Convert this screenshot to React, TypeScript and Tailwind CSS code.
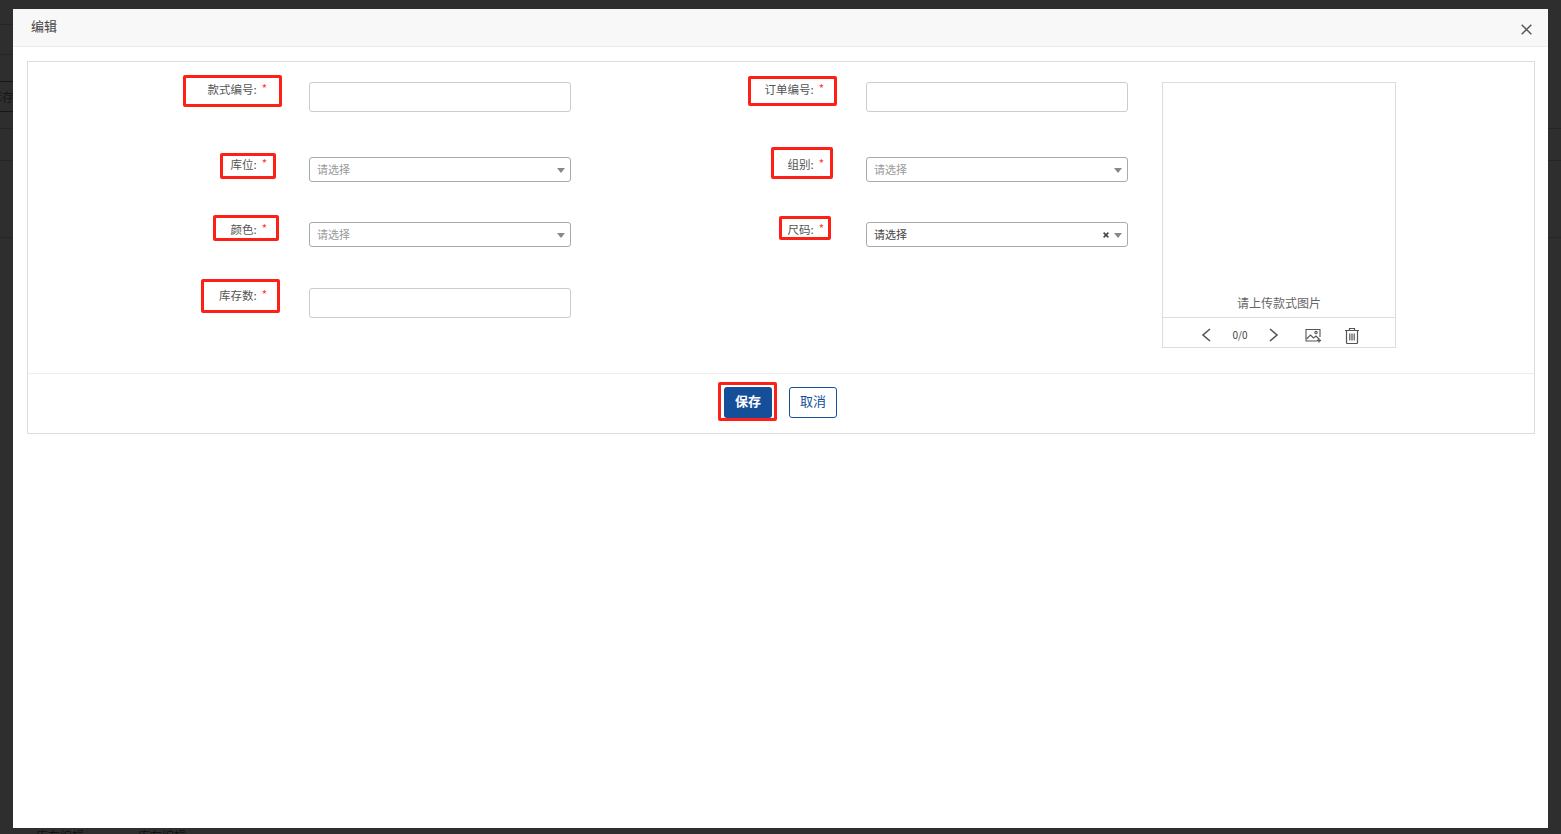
const cjk = "font-['Microsoft_YaHei','Noto_Sans_CJK_SC','Liberation_Sans',sans-serif]";

function Label({ text, box }: { text: string; box: string }) {
  return (
    <div className="relative flex h-[14px] items-start justify-end text-[11.5px] leading-[14px] text-[#555]">
      <span className="whitespace-nowrap">{text}:</span>
      <span className="ml-[5px] mt-[-1px] text-[#f33]">*</span>
      <div className={`pointer-events-none absolute rounded-[2px] border-[3px] border-[#fc2016] ${box}`} />
    </div>
  );
}

function TextInput() {
  return <div className="h-[30px] w-[262px] rounded-[3px] border border-[#ccc] bg-white" />;
}

function Select({ text, filled }: { text: string; filled?: boolean }) {
  return (
    <div className="flex h-[25px] w-[262px] items-center rounded-[3px] border border-[#aaa] bg-white pl-[7px] pr-[5px]">
      <span className={`flex-1 text-[11px] leading-[23px] ${filled ? "text-[#444]" : "text-[#999]"}`}>{text}</span>
      {filled && (
        <svg width="6" height="6" viewBox="0 0 6 6" stroke="#444" strokeWidth="1.5" className="mr-[5px]">
          <path d="m.6.6 4.8 4.8M5.4.6.6 5.4" />
        </svg>
      )}
      <span className="mt-[1px] h-0 w-0 border-x-[4px] border-t-[5px] border-x-transparent border-t-[#888]" />
    </div>
  );
}

function Viewer() {
  return (
    <div className="ml-[34px] flex h-[266px] w-[234px] flex-col border border-[#ddd]">
      <div className="flex flex-1 items-end justify-center pb-[7px] text-[12px] leading-[14px] text-[#666]">请上传款式图片</div>
      <div className="flex h-[30px] items-center border-t border-[#ddd] pl-[37px] pt-[5px] text-[#555]">
        <svg width="12" height="16" viewBox="0 0 12 16" fill="none" stroke="currentColor" strokeWidth="1.6">
          <path d="M10 2 3 8l7 6" />
        </svg>
        <span className="ml-[20px] w-[16px] text-center text-[10px] leading-[14px] text-[#444]">0/0</span>
        <svg width="12" height="16" viewBox="0 0 12 16" fill="none" stroke="currentColor" strokeWidth="1.6" className="ml-[20px]">
          <path d="m2 2 7 6-7 6" />
        </svg>
        <svg width="17" height="15" viewBox="0 0 17 15" fill="none" stroke="currentColor" strokeWidth="1.1" className="ml-[25px]">
          <path d="M12 13H1V1.5h14V9" />
          <path d="m1.5 11 4-4 3 3 2.5-2 3 3" />
          <circle cx="11" cy="4.6" r="1.2" />
          <path d="M14 10.5v4M12 12.5h4" strokeWidth="1.3" />
        </svg>
        <svg width="16" height="17" viewBox="0 0 16 17" fill="none" stroke="currentColor" strokeWidth="1.2" className="ml-[22px]">
          <path d="M1 3.5h14M5.5 3.5V1.5h5v2M2.5 3.5v12a1 1 0 0 0 1 1h9a1 1 0 0 0 1-1v-12M5.8 6.5v7M8 6.5v7M10.2 6.5v7" />
        </svg>
      </div>
    </div>
  );
}

export default function App() {
  return (
    <div className={`relative h-[834px] w-[1561px] overflow-hidden bg-[#2e2e2e] ${cjk}`}>
      <div className="flex h-full flex-col">
        <div className="mt-[24px] h-px w-[13px] shrink-0 bg-[#262626]" />
        <div className="mt-[29px] h-px w-[13px] shrink-0 bg-[#262626]" />
        <div className="mt-[26px] flex h-[31px] w-[13px] shrink-0 items-center overflow-hidden border-y border-[#15151c] text-[12px] text-[#15151c]">
          <span className="ml-[-10px] whitespace-nowrap">库存</span>
        </div>
        <div className="mt-[16px] h-px w-full shrink-0 bg-[#262626]" />
        <div className="mt-[31px] h-px w-full shrink-0 bg-[#262626]" />
        <div className="mt-[76px] h-px w-full shrink-0 bg-[#262626]" />
        <div className="mt-[592px] flex shrink-0 pl-[36px] text-[12px] leading-[12px] text-[#111]">
          <span className="whitespace-nowrap">库存编辑</span>
          <span className="ml-[54px] whitespace-nowrap">库存编辑</span>
        </div>
      </div>

      <div className="absolute left-[13px] top-[9px] flex h-[819px] w-[1535px] flex-col bg-white">
        <div className="flex h-[38px] shrink-0 items-center justify-between border-b border-[#ebebeb] bg-[#f8f8f8] pl-[18px] pr-[16px]">
          <span className="mb-[4px] text-[13px] text-[#444]">编辑</span>
          <svg width="11" height="11" viewBox="0 0 11 11" stroke="#555" strokeWidth="1.5" className="mt-[4px]">
            <path d="m.7.7 9.6 9.6M10.3.7.7 10.3" />
          </svg>
        </div>

        <div className="mx-[14px] mt-[14px] flex h-[373px] w-[1508px] flex-col border border-[#ddd]">
          <div className="flex h-[311px] shrink-0 items-start pt-[20px]">
            <div className="grid grid-cols-[239px_262px_211px_262px] grid-rows-[75px_65px_66px_31px] gap-x-[42px]">
              <Label text="款式编号" box="left-[155px] top-[-7px] h-[32px] w-[99px]" />
              <TextInput />
              <Label text="订单编号" box="left-[135px] top-[-6px] h-[30px] w-[89px]" />
              <TextInput />
              <Label text="库位" box="left-[192px] top-[-4px] h-[26px] w-[56px]" />
              <Select text="请选择" />
              <Label text="组别" box="left-[158px] top-[-10px] h-[32px] w-[62px]" />
              <Select text="请选择" />
              <Label text="颜色" box="left-[185px] top-[-7px] h-[26px] w-[66px]" />
              <Select text="请选择" />
              <Label text="尺码" box="left-[166px] top-[-6px] h-[24px] w-[52px]" />
              <Select text="请选择" filled />
              <Label text="库存数" box="left-[173px] top-[-9px] h-[34px] w-[79px]" />
              <TextInput />
            </div>
            <Viewer />
          </div>
          <div className="flex flex-1 items-start justify-center gap-[17px] border-t border-[#eee] pr-[1px] pt-[13px]">
            <div className="relative">
              <button className="flex h-[31px] w-[48px] items-center justify-center rounded-[3px] bg-[#154f9a] pb-[3px] text-[13px] font-bold text-white">保存</button>
              <div className="pointer-events-none absolute left-[-6px] top-[-5px] h-[39px] w-[59px] rounded-[2px] border-[3px] border-[#fc2016]" />
            </div>
            <button className="flex h-[31px] w-[48px] items-center justify-center rounded-[3px] border border-[#154f9a] bg-white pb-[3px] text-[13px] text-[#154f9a]">取消</button>
          </div>
        </div>
      </div>
    </div>
  );
}
